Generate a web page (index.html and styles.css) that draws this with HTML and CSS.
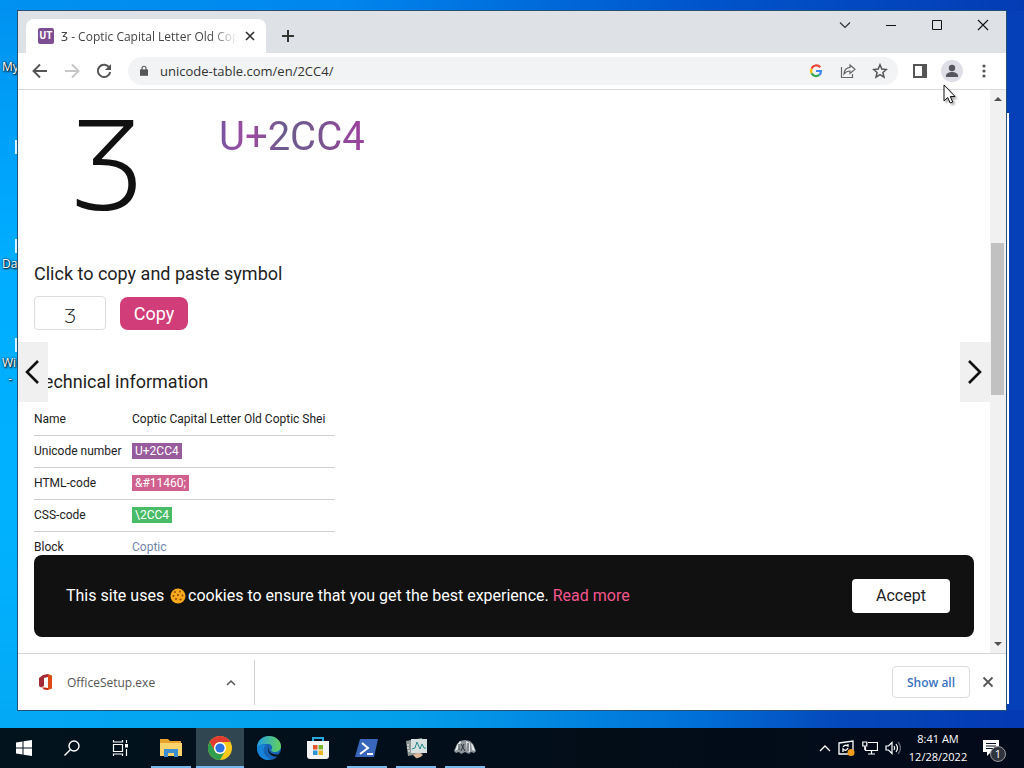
FILE: index.html
```
<!DOCTYPE html>
<html lang="en">
<head>
<meta charset="utf-8">
<title>Ʒ - Coptic Capital Letter Old Coptic Shei</title>
<link rel="stylesheet" href="styles.css">
</head>
<body>
<div class="screen">
  <main class="desktop">
    <span class="desk-label label-my">My</span>
    <span class="desk-label label-da">Da</span>
    <span class="desk-label label-wi">Wi<br>&nbsp;&nbsp;-</span>
    <i class="desk-file file-a"></i><i class="desk-file file-b"></i><i class="desk-file file-c"></i>
    <div class="back-window"></div>
    <section class="window">
      <header class="titlebar">
        <div class="tab">
          <span class="favicon">UT</span>
          <span class="tab-title">Ʒ - Coptic Capital Letter Old Cop</span>
          <button class="icon-btn tab-close" aria-label="Close tab"><svg width="10" height="10" viewBox="0 0 10 10"><path d="M1 1l8 8M9 1l-8 8" stroke="#333" stroke-width="1.7"/></svg></button>
        </div>
        <button class="icon-btn new-tab" aria-label="New tab"><svg width="14" height="14" viewBox="0 0 14 14"><path d="M7 1v12M1 7h12" stroke="#333" stroke-width="2"/></svg></button>
        <div class="caption">
          <button class="icon-btn" aria-label="Search tabs"><svg width="12" height="12" viewBox="0 0 12 12"><path d="M1 3.500l5 5 5-5" fill="none" stroke="#333" stroke-width="1.200"/></svg></button>
          <button class="icon-btn" aria-label="Minimize"><svg width="12" height="12" viewBox="0 0 12 12"><path d="M1 6.500h10" stroke="#111"/></svg></button>
          <button class="icon-btn" aria-label="Maximize"><svg width="12" height="12" viewBox="0 0 12 12"><path d="M1.500 1.500h9v9h-9z" fill="none" stroke="#111"/></svg></button>
          <button class="icon-btn" aria-label="Close"><svg width="12" height="12" viewBox="0 0 12 12"><path d="M1 1l10 10M11 1L1 11" stroke="#111" stroke-width="1.100"/></svg></button>
        </div>
      </header>
      <nav class="toolbar">
        <button class="icon-btn tool" aria-label="Back"><svg width="16" height="16" viewBox="0 0 16 16"><path d="M15 8H2M8 1.500L1.500 8 8 14.500" fill="none" stroke="#555" stroke-width="1.900"/></svg></button>
        <button class="icon-btn tool" aria-label="Forward"><svg width="16" height="16" viewBox="0 0 16 16"><path d="M1 8h13M8 1.500L14.500 8 8 14.500" fill="none" stroke="#c6c6c8" stroke-width="1.900"/></svg></button>
        <button class="icon-btn tool" aria-label="Reload"><svg width="16" height="16" viewBox="0 0 16 16"><path d="M13.300 4.500A6.200 6.200 0 1 0 14.200 9" fill="none" stroke="#555" stroke-width="2"/><path d="M15 1v6H9z" fill="#555"/></svg></button>
        <div class="address">
          <svg width="8" height="12" viewBox="0 0 10 14"><path d="M0 5h10v8H0z" fill="#555"/><path d="M2.500 6V3.500a2.500 2.500 0 0 1 5 0V6" fill="none" stroke="#555" stroke-width="1.400"/></svg>
          <input class="url" aria-label="Address" value="unicode-table.com/en/2CC4/">
          <button class="icon-btn action" aria-label="Google"><svg width="14" height="14" viewBox="0 0 14 14" fill="none" stroke-width="2.200"><path d="M11.200 3.300A5 5 0 0 0 2.600 4.700" stroke="#ea4335"/><path d="M2.600 4.700a5 5 0 0 0 0 4.600" stroke="#fbbc05"/><path d="M2.600 9.300a5 5 0 0 0 7.700 1.600" stroke="#34a853"/><path d="M10.300 10.900A5 5 0 0 0 12 7H7" stroke="#4285f4"/></svg></button>
          <button class="icon-btn action" aria-label="Share"><svg width="16" height="16" viewBox="0 0 16 16" fill="none" stroke="#666" stroke-width="1.200"><path d="M1.500 4v10.500h11V11"/><path d="M10 2l5 4.200-5 4.200V8C7.500 8 5.500 9 4 11c.3-3.800 2.500-6.300 6-6.600z"/></svg></button>
          <button class="icon-btn action" aria-label="Bookmark"><svg width="16" height="16" viewBox="0 0 16 16"><path d="M8 1.800l1.800 4.300 4.600.4-3.500 3 1.100 4.600L8 11.700l-4 2.400 1.100-4.600-3.500-3 4.600-.4z" fill="none" stroke="#555" stroke-width="1.500"/></svg></button>
        </div>
        <button class="icon-btn tool" aria-label="Side panel"><svg width="14" height="14" viewBox="0 0 14 14"><path d="M0 0h14v14H0zM2 2v10h7V2z" fill="#555" fill-rule="evenodd"/></svg></button>
        <button class="icon-btn tool" aria-label="Profile"><svg width="22" height="22" viewBox="0 0 22 22"><circle cx="11" cy="11" r="11" fill="#dddee6"/><circle cx="11" cy="8" r="3.200" fill="#56565c"/><path d="M5 17v-1.500C5 13.200 8.500 12 11 12s6 1.200 6 3.500V17z" fill="#56565c"/></svg></button>
        <button class="icon-btn tool" aria-label="Menu"><svg width="4" height="14" viewBox="0 0 4 14" fill="#555"><circle cx="2" cy="2" r="1.600"/><circle cx="2" cy="7" r="1.600"/><circle cx="2" cy="12" r="1.600"/></svg></button>
      </nav>
      <div class="viewport">
        <article class="page">
          <div class="hero"><span class="symbol">Ʒ</span><span class="codepoint">U+2CC4</span></div>
          <h2 class="heading"><label for="sym">Click to copy and paste symbol</label></h2>
          <div class="copy-row"><input id="sym" class="copy-input" value="Ʒ"><button class="copy-btn">Copy</button></div>
          <h2 class="heading">Technical information</h2>
          <table class="info">
            <tr><th>Name</th><td>Coptic Capital Letter Old Coptic Shei</td></tr>
            <tr><th>Unicode number</th><td><span class="code purple">U+2CC4</span></td></tr>
            <tr><th>HTML-code</th><td><span class="code pink">&amp;#11460;</span></td></tr>
            <tr><th>CSS-code</th><td><span class="code green">\2CC4</span></td></tr>
            <tr><th>Block</th><td><a class="block-link" href="#">Coptic</a></td></tr>
          </table>
        </article>
        <div class="scrollbar">
          <svg width="8" height="4" viewBox="0 0 8 4"><path d="M0 4l4-4 4 4z" fill="#505050"/></svg>
          <div class="track"><div class="thumb"></div></div>
          <svg width="8" height="4" viewBox="0 0 8 4"><path d="M0 0l4 4 4-4z" fill="#505050"/></svg>
        </div>
        <button class="pager prev" aria-label="Previous"><svg width="16" height="26" viewBox="0 0 16 26"><path d="M14 2L3 13l11 11" fill="none" stroke="#111" stroke-width="2.600"/></svg></button>
        <button class="pager next" aria-label="Next"><svg width="16" height="26" viewBox="0 0 16 26"><path d="M2 2l11 11L2 24" fill="none" stroke="#111" stroke-width="2.600"/></svg></button>
        <div class="cookie">
          <p class="cookie-text">This site uses <svg class="cookie-icon" width="16" height="16" viewBox="0 0 16 16"><circle cx="8" cy="8" r="7.500" fill="#f9a91e"/><g fill="#8f4d0c"><circle cx="5" cy="4" r="1"/><circle cx="10" cy="3.500" r="1"/><circle cx="8" cy="7" r="1.100"/><circle cx="3.500" cy="8" r="1"/><circle cx="12.500" cy="7.500" r="1"/><circle cx="6" cy="11" r="1.100"/><circle cx="10.500" cy="11.500" r="1.100"/></g></svg>cookies to ensure that you get the best experience. <a class="read-more" href="#">Read more</a></p>
          <button class="accept">Accept</button>
        </div>
      </div>
      <footer class="shelf">
        <div class="download">
          <svg width="14" height="16" viewBox="0 0 14 16"><path d="M4 1L9 0v3L5 4v8l-3 1.500L0 12V4z" fill="#a52a37"/><path d="M9 0l4 1.500v13L9 16l-6-2.500L9 14z" fill="#dc4a16"/><path d="M9 14l-6-.5 2 2L9 16z" fill="#c5270c"/></svg>
          <span class="file-name">OfficeSetup.exe</span>
          <button class="icon-btn" aria-label="Download options"><svg width="10" height="7" viewBox="0 0 10 7"><path d="M1 6l4-4 4 4" fill="none" stroke="#555" stroke-width="1.500"/></svg></button>
        </div>
        <button class="show-all">Show all</button>
        <button class="icon-btn" aria-label="Close downloads"><svg width="12" height="12" viewBox="0 0 12 12"><path d="M1.500 1.500l9 9M10.500 1.500l-9 9" stroke="#555" stroke-width="1.800"/></svg></button>
      </footer>
    </section>
    <svg class="cursor" width="14" height="20" viewBox="0 0 14 20"><path d="M1 1v16l3.700-3.500 2.500 5.500 2.500-1-2.400-5.500H12z" fill="#fff" stroke="#111"/></svg>
  </main>
  <footer class="taskbar">
    <button class="task" aria-label="Start"><svg width="16" height="16" viewBox="0 0 16 16" fill="#fff"><path d="M0 2.400L6.500 1.500v6H0zM7.500 1.300L16 0v7.500H7.500zM0 8.500h6.500v6L0 13.600zM7.500 8.500H16V16l-8.500-1.300z"/></svg></button>
    <button class="task" aria-label="Search"><svg width="16" height="16" viewBox="0 0 16 16" fill="none" stroke="#fff" stroke-width="1.400"><circle cx="10" cy="6" r="5"/><path d="M6.300 9.700L.5 15.500"/></svg></button>
    <button class="task" aria-label="Task view"><svg width="17" height="16" viewBox="0 0 17 16" fill="none" stroke="#fff" stroke-width="1.200"><path d="M1.500 4.500h9v7h-9zM1.500 0v2h9V0M1.500 16v-2h9v2M14.500 0v3M14.500 9v7"/><path d="M13 4h3v3.500h-3z" fill="#fff" stroke="none"/></svg></button>
    <button class="task running" aria-label="File Explorer"><svg width="22" height="20" viewBox="0 0 22 20"><path d="M0 1h8l2 2h11v15H0z" fill="#e9a22b"/><path d="M0 5h22v13H0z" fill="#fbd46b"/><path d="M4 11h14v8h-4v-4H8v4H4z" fill="#3d8fd1"/></svg></button>
    <button class="task running active" aria-label="Chrome"><svg width="24" height="24" viewBox="0 0 24 24"><circle cx="12" cy="12" r="12" fill="#f9c81c"/><path d="M1.600 6A12 12 0 0 1 22.400 6H12a6 6 0 0 0-5.200 9z" fill="#df3b30"/><path d="M1.600 6A12 12 0 0 0 12 24l5.200-9A6 6 0 0 1 6.800 15z" fill="#2f9e4f"/><circle cx="12" cy="12" r="6" fill="#fff"/><circle cx="12" cy="12" r="4.600" fill="#2d73e0"/></svg></button>
    <button class="task" aria-label="Edge"><svg width="24" height="24" viewBox="0 0 24 24"><defs><linearGradient id="eg" x1="0" y1="0" x2="1" y2="0"><stop offset="0" stop-color="#239fe2"/><stop offset="1" stop-color="#62d15a"/></linearGradient></defs><circle cx="12" cy="12" r="12" fill="#1764b4"/><path d="M0 12C0 4 6 0 12 0c7 0 12 5 12 10 0 4-3 6-6.500 6-2.500 0-4-1-3-2.500 1.500-2 .5-5-3-5.500C6 7.500 1 9 0 12z" fill="url(#eg)"/><path d="M9 9c-5 4-2 12 5 14.500-8 2-14-4-14-11.500C2 8.500 6 8 9 9z" fill="#1685d9"/><path d="M12 10c-2 4 1 9 9.500 8.500L23 16l2 1v3l-4 .5C14 22 8.500 15 12 10z" fill="#061420"/></svg></button>
    <button class="task" aria-label="Microsoft Store"><svg width="24" height="24" viewBox="0 0 24 24"><path d="M7 6V2h10v4" fill="none" stroke="#29a8e0" stroke-width="2"/><path d="M1 5h22v15q0 3-3 3H4q-3 0-3-3z" fill="#f2f3f5"/><path d="M7 9h4.500v4.500H7z" fill="#e2542b"/><path d="M12.500 9H17v4.500h-4.500z" fill="#79b72a"/><path d="M7 14.500h4.500V19H7z" fill="#2a94d4"/><path d="M12.500 14.500H17V19h-4.500z" fill="#edb521"/></svg></button>
    <button class="task running" aria-label="PowerShell"><svg width="24" height="20" viewBox="0 0 24 20"><path d="M5 1h18l-4 18H0z" fill="#3766ba"/><path d="M7 5l6 5-8 6M12 16h6" fill="none" stroke="#fff" stroke-width="2"/></svg></button>
    <button class="task running" aria-label="Monitor"><svg width="24" height="22" viewBox="0 0 24 22"><path d="M2 4l16-3 2 15-16 3z" fill="#8e9794"/><path d="M7 2h16v14H7z" fill="#d7e0df"/><path d="M8 12l3-1 2-6 3 7 2-5 2 4h2" fill="none" stroke="#2b8b90"/><path d="M3 8h2M3 11h2M4 14h2" stroke="#fff"/><path d="M9 18q6-4 10 0-4 4-7 3z" fill="#dcb59a"/></svg></button>
    <button class="task running" aria-label="Utility"><svg width="22" height="16" viewBox="0 0 22 16"><path d="M6 1l5-1 5 1 3 3 3 7-2 2-3-1-2 2-4-2-4 2-2-2-3 1-2-2L3 4z" fill="#8d959b"/><path d="M6 1L3 5l-2 6 4-2 2-7zM12 1l1 10 3 1V3zM17 3l1 7 3 1-2-6z" fill="#e4e7e8"/><path d="M7 4l4 7M10 4l-3 7M14 3v8M5 4v6" stroke="#2b333a"/></svg></button>
    <div class="tray">
      <svg width="12" height="8" viewBox="0 0 12 8"><path d="M1 7l5-5 5 5" fill="none" stroke="#fff" stroke-width="1.300"/></svg>
      <svg width="17" height="16" viewBox="0 0 17 16"><path d="M1 3l14-2v13H1z" fill="none" stroke="#fff" stroke-width="1.300"/><path d="M5 7q2-3 5-1V4M10 8q-2 4-5 1v3" fill="none" stroke="#fff" stroke-width="1.300"/><circle cx="13" cy="12.500" r="3.500" fill="#f19b1e"/></svg>
      <svg width="16" height="14" viewBox="0 0 16 14" fill="none" stroke="#fff" stroke-width="1.200"><path d="M6 1.500h9.500v8H3.500V6M9.500 9.500V13M6 13h7"/><path d="M.8 1h4v4h-4zM2.800 5v4"/></svg>
      <svg width="16" height="14" viewBox="0 0 16 14" fill="none" stroke="#fff" stroke-width="1.200"><path d="M1 5h2.500L7 1.500v11L3.500 9H1z"/><path d="M9 5q1.500 2 0 4M11 3q3 4 0 8"/><path d="M13 1q5 6 0 12" stroke="#667"/></svg>
      <div class="clock"><span>8:41 AM</span><span>12/28/2022</span></div>
      <div class="notify"><svg width="16" height="16" viewBox="0 0 16 16"><path d="M0 0h16v12H8l-4 4v-4H0z" fill="#fff"/><path d="M3 3.500h10M3 6h10M3 8.500h7" stroke="#061020"/></svg><span class="badge">1</span></div>
    </div>
  </footer>
</div>
</body>
</html>
```
FILE: styles.css
```
* { box-sizing: border-box; }
body { margin: 0; font-family: "Open Sans", "Noto Sans", sans-serif; color: #222; }
button { font: inherit; border: 0; padding: 0; background: none; }
svg { display: block; flex: none; }

.screen { display: flex; flex-direction: column; height: 100vh; overflow: hidden; }
.desktop {
  position: relative; flex: 1; min-height: 0; display: flex; padding: 10px 17px 17px;
  background:
    linear-gradient(90deg, #0092f0, #0086ee 33%, #0055cc 68%, #043cb4) top / 100% 11px no-repeat,
    linear-gradient(90deg, #04a9f5, #049feb 40%, #0070d8 68%, #0548bb 82%, #043ab4) bottom / 100% 18px no-repeat,
    linear-gradient(#0092f0, #00adff 35%, #00b2ff 70%, #04a9f5) left / 50% 100% no-repeat,
    #0540b8;
}
.desk-label { position: absolute; left: 2px; color: #fff; font-size: 12px; line-height: 16px; text-shadow: 1px 1px 2px #000, 0 0 2px #000; }
.label-my { top: 59px; }
.label-da { top: 256px; }
.label-wi { top: 355px; }
.desk-file { position: absolute; left: 15px; width: 3px; height: 14px; background: #d9f2ff; }
.file-a { top: 140px; }
.file-b { top: 239px; }
.file-c { top: 338px; }
.back-window { position: absolute; top: 113px; right: 15px; bottom: 24px; width: 4px; background: #fff; }
.window { position: relative; flex: 1; min-width: 0; display: flex; flex-direction: column; background: #fff; border: 1px solid #245073; }

.icon-btn { display: inline-flex; align-items: center; justify-content: center; flex: none; }
.titlebar { display: flex; align-items: center; height: 42px; flex: none; padding: 8px 0 0 8px; background: #dee1e6; }
.tab { display: flex; align-items: center; gap: 7px; width: 240px; height: 34px; padding: 0 10px 0 12px; background: #fff; border-radius: 8px 8px 0 0; }
.favicon { width: 16px; height: 16px; border-radius: 2px; background: #7e4e92; color: #fff; font: bold 10px/16px Roboto, sans-serif; text-align: center; }
.tab-title { flex: 1; min-width: 0; white-space: nowrap; font-size: 12px; color: #444; mask-image: linear-gradient(90deg, #000 85%, transparent); }
.tab-close { width: 12px; height: 16px; }
.new-tab { width: 44px; height: 32px; }
.caption { display: flex; align-self: flex-start; margin: -8px 0 0 auto; }
.caption .icon-btn { width: 46px; height: 28px; }

.toolbar { display: flex; align-items: center; height: 37px; flex: none; padding: 0 6px; border-bottom: 1px solid #d8dadd; background: #fff; }
.tool { width: 32px; height: 32px; }
.address { flex: 1; min-width: 0; display: flex; align-items: center; height: 28px; margin: 0 6px 0 8px; padding: 0 2px 0 12px; border-radius: 14px; background: #f1f3f4; }
.url { flex: 1; min-width: 0; margin: 0; padding: 0 0 0 12px; border: 0; background: none; font: 13px/20px "Open Sans", "Noto Sans", sans-serif; color: #333; }
.action { width: 32px; height: 28px; }

.viewport { position: relative; flex: 1; min-height: 0; display: flex; }
.page { flex: 1; min-width: 0; padding: 17px 16px 0; font-family: Roboto, sans-serif; }
.hero { display: flex; align-items: flex-start; height: 155px; }
.symbol { width: 185px; padding-left: 38px; font: 300 126px/108px "Open Sans", "Noto Sans", sans-serif; color: #111; }
.codepoint { font-size: 40px; line-height: 60px; background: linear-gradient(90deg, #7656a0, #a04aa0 20%, #6a5c8c 45%, #7a5490 70%, #a040a0); background-clip: text; color: transparent; }
.heading { margin: 0; font-size: 18px; line-height: 24px; font-weight: 400; color: #222; }
.copy-row { display: flex; align-items: center; gap: 14px; margin: 10px 0 40px; }
.copy-input { width: 72px; height: 34px; padding: 4px 0 0; border: 1px solid #ddd; border-radius: 4px; font: 300 20px/28px Lato, "Noto Sans", sans-serif; text-align: center; color: #111; }
.copy-btn { width: 68px; height: 33px; border-radius: 8px; background: #d03d78; color: #fff; font-size: 18px; }
.info { width: 301px; margin-top: 9px; border-collapse: collapse; font-size: 12px; line-height: 16px; white-space: nowrap; }
.info th { width: 98px; padding: 0; height: 32px; font-weight: 400; text-align: left; }
.info td { padding: 0; }
.info tr { border-bottom: 1px solid #d0d0d0; }
.code { display: inline-block; padding: 0 3px; color: #fff; }
.purple { background: #985b9b; }
.pink { background: #d0608e; }
.green { background: #48bc67; }
.block-link { color: #7286aa; text-decoration: none; }

.scrollbar { display: flex; flex-direction: column; align-items: center; width: 16px; padding: 7px 2px 7px 1px; background: #f1f1f1; }
.track { flex: 1; align-self: stretch; margin: 4px 0; }
.thumb { height: 28.500%; margin-top: 138px; background: #c1c1c1; }

.pager { position: absolute; top: 252px; width: 30px; height: 60px; display: flex; align-items: center; justify-content: center; background: #f0f0f0; }
.prev { left: 0; padding-right: 2px; }
.next { right: 16px; }
.cookie { position: absolute; left: 16px; right: 32px; bottom: 16px; display: flex; align-items: center; justify-content: space-between; height: 82px; padding: 0 24px 0 32px; border-radius: 8px; background: #111; color: #fff; font: 16px/24px Roboto, sans-serif; }
.cookie-text { margin: 0; }
.cookie-icon { display: inline-block; vertical-align: -3px; margin: 0 2px; }
.read-more { color: #f4568e; text-decoration: none; }
.accept { width: 98px; height: 34px; border-radius: 4px; background: #fff; color: #222; }

.shelf { display: flex; align-items: center; height: 57px; flex: none; padding: 0 12px 0 0; border-top: 1px solid #d5d6d8; background: #fff; }
.download { display: flex; align-items: center; width: 237px; height: 45px; padding: 0 18px 0 21px; border-right: 1px solid #d0d0d0; }
.file-name { flex: 1; padding-left: 14px; font-size: 12px; color: #555; }
.show-all { width: 78px; height: 32px; margin: 0 12px 0 auto; border: 1px solid #dadce0; border-radius: 4px; font-size: 12px; font-weight: 600; color: #3b73c2; }
.cursor { position: absolute; left: 943px; top: 84px; filter: drop-shadow(2px 2px 1px #0005); }

.taskbar { display: flex; height: 40px; flex: none; background: linear-gradient(90deg, #02131e, #020d18 60%, #030a1a); color: #fff; }
.task { position: relative; display: flex; align-items: center; justify-content: center; width: 48px; margin-right: 1px; }
.task:first-child, .task:nth-child(2), .task:nth-child(3) { margin-right: 0; }
.task:nth-child(3) { margin-right: 3px; }
.running { box-shadow: inset 0 -2px #76b9ed; background-clip: padding-box; border: 0 solid transparent; border-width: 0 4px; }
.active { background: #304650; border-width: 0; }
.tray { display: flex; align-items: center; gap: 7px; margin-left: auto; padding-right: 25px; }
.clock { display: flex; flex-direction: column; align-items: center; width: 60px; font-size: 11px; line-height: 18px; white-space: nowrap; }
.notify { position: relative; margin-left: 8px; }
.badge { position: absolute; left: 7px; top: 6px; width: 16px; height: 16px; border: 1px solid #999; border-radius: 8px; background: #30343d; font-size: 11px; line-height: 14px; text-align: center; }
```
